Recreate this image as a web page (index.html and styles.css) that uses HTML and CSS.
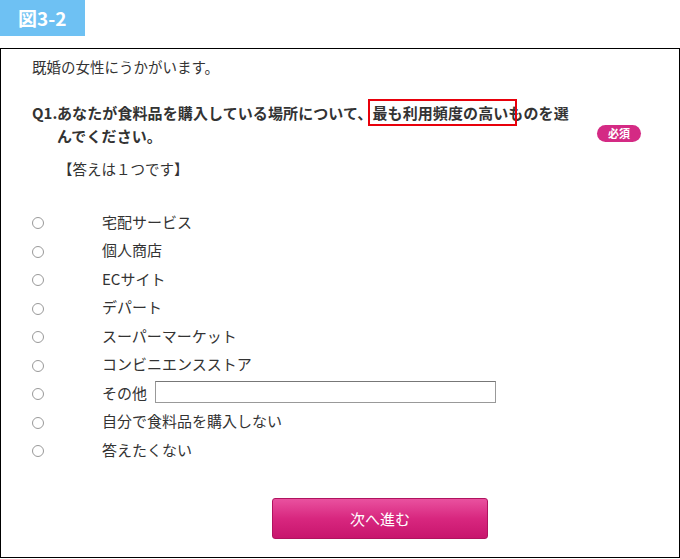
FILE: index.html
```html
<!DOCTYPE html>
<html lang="ja">
  <head>
    <meta charset="UTF-8" />
    <meta name="viewport" content="width=device-width, initial-scale=1.0" />
    <title>図3-2</title>
    <link rel="stylesheet" href="styles.css">
  </head>
  <body>
    <div class="fig-label">図3-2</div>

    <div class="frame">
      <p class="intro">既婚の女性にうかがいます。</p>

      <div class="question">
        <div class="q-body">
          <span class="q-no">Q1.</span>
          <span class="q-text">あなたが食料品を購入している場所について、<span class="mark">最も利用頻度の高い</span>ものを選んでください。</span>
        </div>
        <span class="badge">必須</span>
      </div>

      <p class="note">【答えは１つです】</p>

      <ul class="options">
        <li class="option"><span class="radio"></span><span class="label">宅配サービス</span></li>
        <li class="option"><span class="radio"></span><span class="label">個人商店</span></li>
        <li class="option"><span class="radio"></span><span class="label">ECサイト</span></li>
        <li class="option"><span class="radio"></span><span class="label">デパート</span></li>
        <li class="option"><span class="radio"></span><span class="label">スーパーマーケット</span></li>
        <li class="option"><span class="radio"></span><span class="label">コンビニエンスストア</span></li>
        <li class="option"><span class="radio"></span><span class="label">その他</span><input class="other" type="text"></li>
        <li class="option"><span class="radio"></span><span class="label">自分で食料品を購入しない</span></li>
        <li class="option"><span class="radio"></span><span class="label">答えたくない</span></li>
      </ul>

      <button class="next">次へ進む</button>
    </div>
  </body>
</html>
```

FILE: styles.css
```css
body {
  margin: 0;
  font-family: "Noto Sans CJK JP", "Noto Sans", sans-serif;
  color: #333;
  background-color: #fff;
}
.fig-label {
  width: 85px;
  height: 36px;
  box-sizing: border-box;
  padding-left: 18px;
  background-color: #6ec1f3;
  color: #fff;
  font-size: 19px;
  font-weight: bold;
  line-height: 36px;
}
.frame {
  margin-top: 12px;
  border: 1px solid #000;
  padding: 8px 38px 18px 31px;
}
.intro {
  margin: 0;
  font-size: 14.5px;
  line-height: 20px;
}
.question {
  display: flex;
  justify-content: space-between;
  align-items: flex-end;
  margin-top: 24px;
}
.q-body {
  display: flex;
  font-size: 15px;
  font-weight: bold;
  line-height: 23px;
}
.q-no {
  width: 25px;
  flex-shrink: 0;
}
.q-text {
  width: 522px;
  letter-spacing: 0.1px;
}
.mark {
  position: relative;
}
.mark::after {
  content: "";
  position: absolute;
  top: -3px;
  bottom: -3px;
  left: -4px;
  right: -9px;
  border: 2px solid #e8000b;
}
.badge {
  margin-bottom: 5px;
  width: 44px;
  height: 17px;
  border-radius: 9px;
  background-color: #d42a84;
  color: #fff;
  font-size: 11px;
  font-weight: bold;
  line-height: 17px;
  text-align: center;
}
.note {
  margin: 12px 0 0;
  padding-left: 26px;
  font-size: 14.5px;
  line-height: 20px;
}
.options {
  list-style: none;
  margin: 28px 0 0;
  padding: 0;
}
.option {
  display: flex;
  align-items: center;
  height: 28.5px;
  font-size: 15px;
}
.radio {
  width: 12px;
  height: 12px;
  box-sizing: border-box;
  border: 1px solid #999;
  border-radius: 50%;
  margin-top: 4px;
}
.label {
  margin-left: 58px;
}
.other {
  margin-left: 8px;
  width: 341px;
  height: 22px;
  box-sizing: border-box;
  border: 1px solid #999;
  border-top-color: #777;
  padding: 0 4px;
}
.next {
  display: block;
  margin: 34px 0 0 240px;
  width: 216px;
  height: 41px;
  border: 1px solid #b0135f;
  border-radius: 3px;
  background: linear-gradient(#e9519f, #d8277f 50%, #c8156d);
  color: #fff;
  font-family: inherit;
  font-size: 15px;
}
```
